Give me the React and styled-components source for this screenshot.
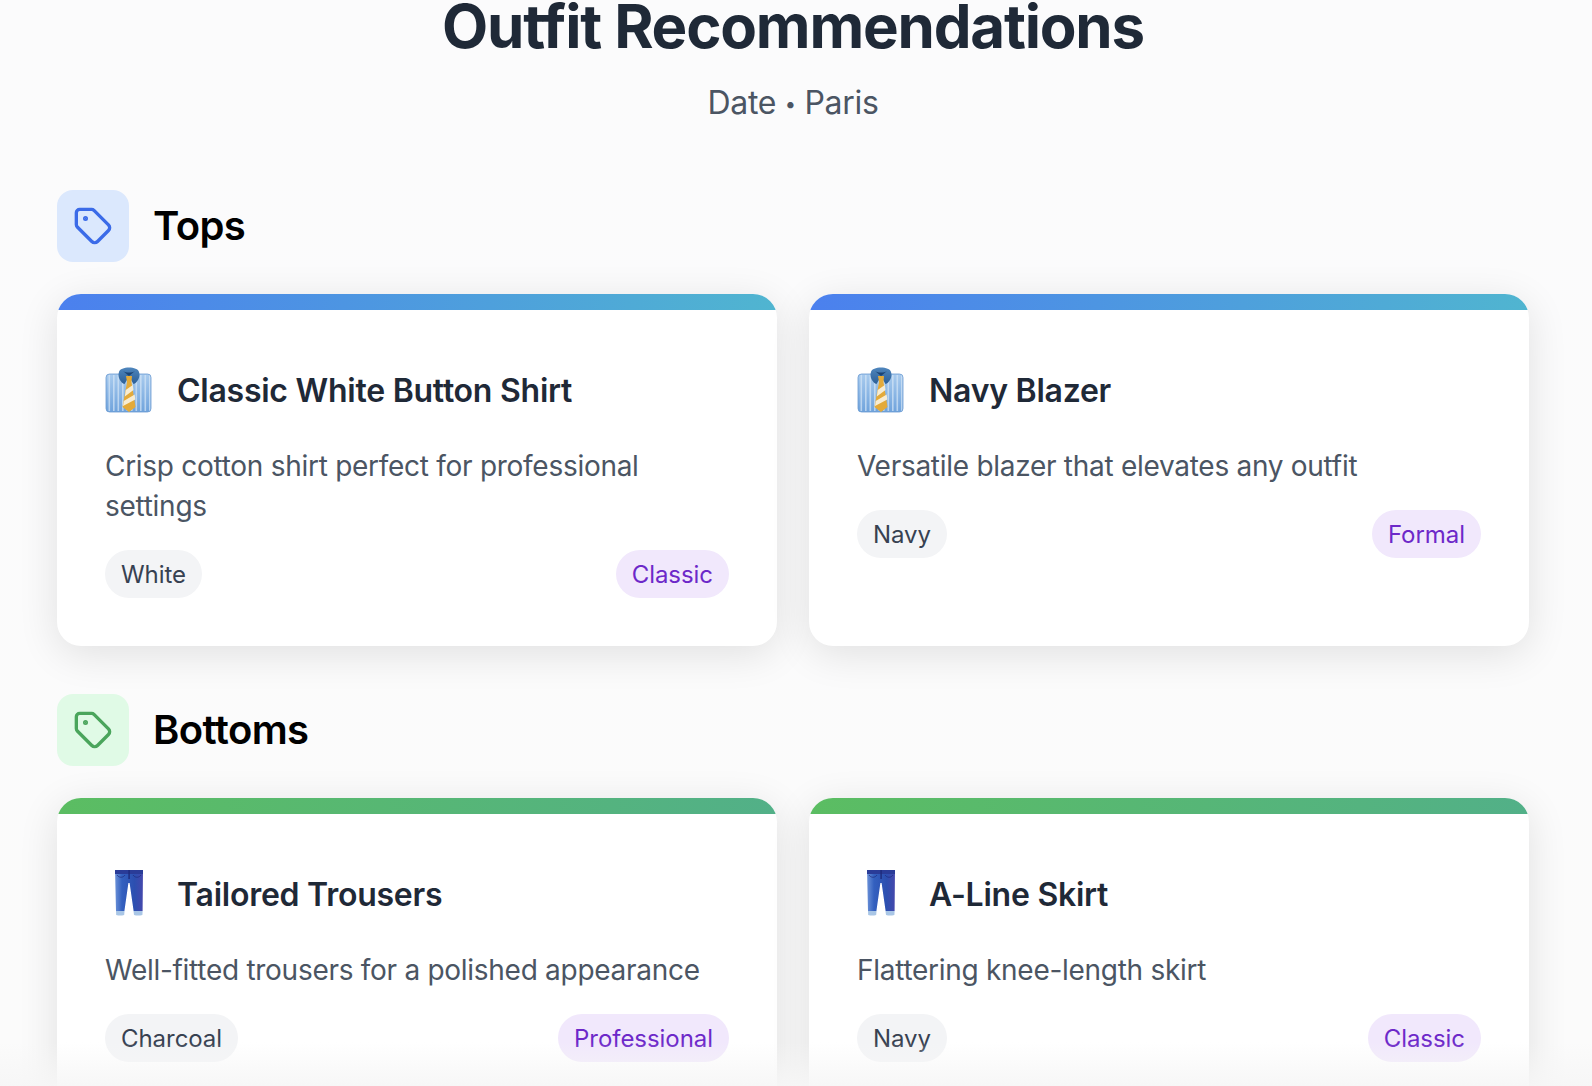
import React from "react";
import styled, { createGlobalStyle } from "styled-components";
import { Tag as TagIcon } from "lucide-react";

const Global = createGlobalStyle`
  html, body { margin: 0; padding: 0; height: 1086px; overflow: hidden; background: #fbfbfb; }
  body { font-family: Inter, "Liberation Sans", sans-serif; }
`;
const Page = styled.div`
  height: 1086px; overflow: hidden; box-sizing: border-box;
  padding: 0 63px 0 57px; position: relative;
  background: linear-gradient(180deg, #fbfbfc, #fbfbfb);
`;
const Header = styled.header`
  text-align: center; margin-top: -12px; margin-bottom: 62px;
`;
const Title = styled.h1`
  margin: 0; font-size: 60px; line-height: 76px; font-weight: 700; color: #1f2937; letter-spacing: -1.2px;
`;
const Subtitle = styled.p`
  margin: 15px 0 0; font-size: 32px; line-height: 48px; font-weight: 400; color: #4b5563; letter-spacing: -0.3px;
`;
const Dot = styled.span`font-size: 20px; vertical-align: 3px; margin: 0;`;
const Section = styled.section`margin-bottom: 48px;`;
const SectionHead = styled.div`
  display: flex; align-items: center; gap: 24px; margin-bottom: 32px;
`;
const IconBox = styled.div`
  width: 72px; height: 72px; border-radius: 16px; display: flex; align-items: center; justify-content: center;
  background: ${p => p.$bg}; color: ${p => p.$fg};
`;
const SectionTitle = styled.h2`
  margin: 0; font-size: 40px; line-height: 48px; font-weight: 600; color: #000; letter-spacing: -0.6px;
`;
const Grid = styled.div`
  display: grid; grid-template-columns: 720px 720px; gap: 32px;
`;
const Card = styled.article`
  background: #fff; border-radius: 24px; overflow: hidden;
  box-shadow: 0 8px 40px rgba(0,0,0,0.11);
  display: flex; flex-direction: column;
`;
const Bar = styled.div`
  height: 16px; background: linear-gradient(90deg, ${p => p.$from}, ${p => p.$to});
`;
const Body = styled.div`padding: 48px;`;
const CardHead = styled.div`
  display: flex; align-items: center; gap: 24px; margin-bottom: 24px; height: 64px;
`;
const Emoji = styled.svg`width: 48px; height: 48px; flex: none; display: block;`;
const CardTitle = styled.h3`
  margin: 0; padding-top: 2px; font-size: 32px; line-height: 48px; font-weight: 600; color: #1f2937; letter-spacing: -0.25px;
`;
const Desc = styled.p`
  margin: 0 0 24px; font-size: 28px; line-height: 40px; color: #4b5563; letter-spacing: -0.28px;
`;
const Meta = styled.div`display: flex; justify-content: space-between; align-items: center;`;
const Pill = styled.span`
  height: 48px; box-sizing: border-box; padding: 0 16px; border-radius: 24px; display: inline-flex; align-items: center;
  font-size: 24px; letter-spacing: -0.05px; background: ${p => p.$bg}; color: ${p => p.$fg};
`;
const Fade = styled.div`
  position: absolute; left: 0; right: 0; bottom: 0; height: 44px; pointer-events: none;
  background: linear-gradient(180deg, rgba(246,246,246,0), rgba(246,246,246,0.9));
`;

function Shirt() {
  const stripes = [];
  for (let x = 3.5; x < 46; x += 4.5) stripes.push(<rect key={x} x={x} y="9" width="1.6" height="36" fill="#d4e5f7" opacity="0.7" />);
  return (
    <Emoji viewBox="0 0 48 48" aria-hidden="true">
      <defs>
        <linearGradient id="sh" x1="0" y1="0" x2="0" y2="1"><stop offset="0" stopColor="#a8cbee" /><stop offset="1" stopColor="#6fa3dc" /></linearGradient>
        <linearGradient id="co" x1="0" y1="0" x2="0" y2="1"><stop offset="0" stopColor="#4f86bd" /><stop offset="1" stopColor="#2c5f97" /></linearGradient>
      </defs>
      <rect x="1" y="8" width="45" height="38" rx="3.5" fill="url(#sh)" />
      {stripes}
      <rect x="1" y="8" width="45" height="38" rx="3.5" fill="none" stroke="#6b9bd2" strokeWidth="0.8" />
      <path d="M14 6 C15 0 33 0 34 6 C36 11 32 17 28.5 18 L24 10.5 L19.5 18 C16 17 12 11 14 6Z" fill="url(#co)" />
      <path d="M18 5 C21 7 27 7 30 5 L24 10Z" fill="#1b4474" />
      <path d="M21 10 L27 10 L26.5 16 L30.5 41 L24 46 L17.5 41 L22 16Z" fill="#e3aa3a" />
      <path d="M20.7 24 L27.8 19 L28.5 24 L19.8 30.5Z M18.7 35 L29.7 28.5 L30.3 33.5 L18 40Z" fill="#f7ecd2" />
    </Emoji>
  );
}
function Jeans() {
  return (
    <Emoji viewBox="0 0 48 48" aria-hidden="true">
      <defs>
        <linearGradient id="je" x1="0" y1="0" x2="1" y2="0"><stop offset="0" stopColor="#6b91d8" /><stop offset="0.25" stopColor="#3360bf" /><stop offset="0.7" stopColor="#2c4fb0" /><stop offset="1" stopColor="#4548ac" /></linearGradient>
      </defs>
      <path d="M10 -1 H38 L37.6 41 H28.6 L24.6 13 L23.4 13 L19.4 41 H11 Z" fill="url(#je)" />
      <rect x="10" y="0" width="28" height="4" fill="#2a3c98" />
      <rect x="23.4" y="0" width="1.4" height="9" fill="#1f2c7c" />
      <path d="M12 5 C14 8 18 8 20 5 M28 5 C30 8 34 8 36 5" stroke="#1f2c7c" fill="none" strokeWidth="0.7" />
      <path d="M11 41 H19.5 L19.2 45 Q15 46 11.2 45Z" fill="#a9c6e6" />
      <path d="M28.5 41 H37.6 L37.4 45 Q33 46 29 45Z" fill="#a9c6e6" />
    </Emoji>
  );
}

const sections = [
  { title: "Tops", bg: "#dbe8fd", fg: "#3b6be8", from: "#4b80ee", to: "#50b5d0", E: Shirt, items: [
    { t: "Classic White Button Shirt", d: "Crisp cotton shirt perfect for professional settings", c: "White", s: "Classic" },
    { t: "Navy Blazer", d: "Versatile blazer that elevates any outfit", c: "Navy", s: "Formal" },
  ]},
  { title: "Bottoms", bg: "#e0fae6", fg: "#4aa55c", from: "#5bbd62", to: "#52b088", E: Jeans, items: [
    { t: "Tailored Trousers", d: "Well-fitted trousers for a polished appearance", c: "Charcoal", s: "Professional" },
    { t: "A-Line Skirt", d: "Flattering knee-length skirt", c: "Navy", s: "Classic" },
  ]},
];

export default function App() {
  return (
    <Page>
      <Global />
      <Header>
        <Title>Outfit Recommendations</Title>
        <Subtitle>Date <Dot>•</Dot> Paris</Subtitle>
      </Header>
      {sections.map(s => (
        <Section key={s.title}>
          <SectionHead>
            <IconBox $bg={s.bg} $fg={s.fg}><TagIcon size={40} strokeWidth={2} /></IconBox>
            <SectionTitle>{s.title}</SectionTitle>
          </SectionHead>
          <Grid>
            {s.items.map(i => (
              <Card key={i.t}>
                <Bar $from={s.from} $to={s.to} />
                <Body>
                  <CardHead><s.E /><CardTitle>{i.t}</CardTitle></CardHead>
                  <Desc>{i.d}</Desc>
                  <Meta>
                    <Pill $bg="#f3f4f6" $fg="#374151">{i.c}</Pill>
                    <Pill $bg="#f1e8fc" $fg="#6d28c9">{i.s}</Pill>
                  </Meta>
                </Body>
              </Card>
            ))}
          </Grid>
        </Section>
      ))}
      <Fade />
    </Page>
  );
}
